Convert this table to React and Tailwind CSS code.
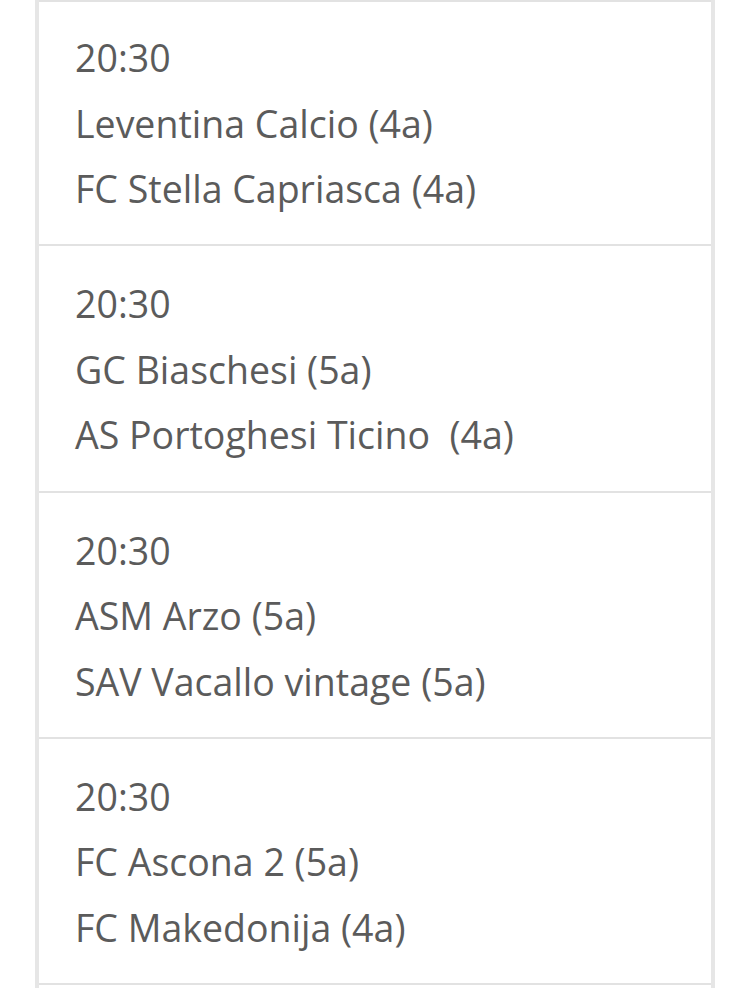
const matches = [
  { time: '20:30', home: 'Leventina Calcio (4a)', away: 'FC Stella Capriasca (4a)' },
  { time: '20:30', home: 'GC Biaschesi (5a)', away: 'AS Portoghesi Ticino  (4a)' },
  { time: '20:30', home: 'ASM Arzo (5a)', away: 'SAV Vacallo vintage (5a)' },
  { time: '20:30', home: 'FC Ascona 2 (5a)', away: 'FC Makedonija (4a)' },
];

function MatchRow({ match }) {
  return (
    <div className="h-[246.3px] border-b-2 border-[#e2e2e2] pl-[36px] pt-[25px] first:border-t-2 first:pt-[23px]">
      <div className="text-[37.5px] leading-[65.5px] text-[#5b5b5b] whitespace-pre">{match.time}</div>
      <div className="text-[37.5px] leading-[65.5px] text-[#5b5b5b] whitespace-pre">{match.home}</div>
      <div className="text-[37.5px] leading-[65.5px] text-[#5b5b5b] whitespace-pre">{match.away}</div>
    </div>
  );
}

export default function App() {
  return (
    <div className="w-[750px] h-[988px] overflow-hidden bg-white" style={{ fontFamily: '"Open Sans", sans-serif' }}>
      <div className="ml-[35px] w-[680px] h-[988px] border-x-[4px] border-[#e6e6e6]">
        {matches.map((m, i) => (
          <MatchRow key={i} match={m} />
        ))}
      </div>
    </div>
  );
}
